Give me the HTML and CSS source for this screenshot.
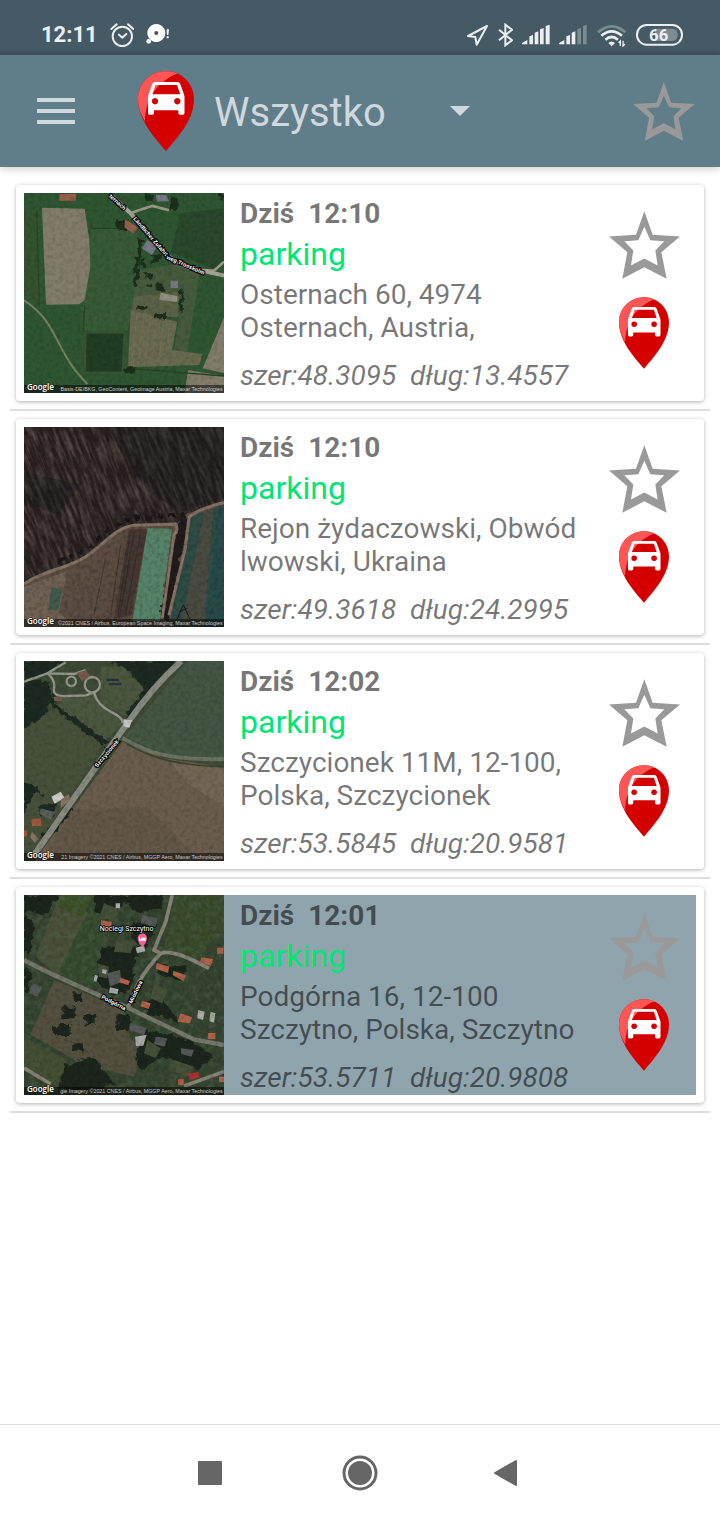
FILE: index.html
```html
<!DOCTYPE html>
<html lang="pl">
<head>
<meta charset="utf-8">
<meta name="viewport" content="width=device-width, initial-scale=1">
<title>Wszystko</title>
<link rel="stylesheet" href="styles.css">
</head>
<body>
<svg class="defs" aria-hidden="true">
  <symbol id="pin" viewBox="0 0 56 80">
    <path fill="#d40000" d="M28 0C12.500 0 0 12.500 0 28C0 49 17 67 28 80C39 67 56 49 56 28C56 12.500 43.500 0 28 0Z"/>
    <path fill="#f55" d="M28 0C12.500 0 0 12.500 0 28C0 36 3 43.500 7 50.500C7 28 20 10 39.500 2.500C36 1 32 0 28 0Z"/>
    <path fill="#fff" fill-rule="evenodd" d="M17 11H39.500Q41.500 11 42.300 13L46.500 25V42Q46.500 43.800 44.800 43.800H42Q40.300 43.800 40.300 42V39.300H16V42Q16 43.800 14.300 43.800H11.700Q10 43.800 10 42V25L14.200 13Q15 11 17 11ZM17.500 14L14.300 23.200H42.200L39 14ZM17 27a3.200 3.200 0 1 0 .01 0ZM39.300 27a3.200 3.200 0 1 0 .01 0Z"/>
  </symbol>
  <symbol id="star" viewBox="86 94 213 203">
    <path fill="#999" fill-rule="evenodd" d="M192 94L217 165L299 170L243 217L259 297L192 262L126 297L141 217L86 170L167 165ZM192 141L174 181L132 184L159 212L152 257L192 236L232 257L225 212L252 184L210 181Z"/>
  </symbol>
  <filter id="grain" x="0" y="0" width="100%" height="100%">
    <feTurbulence type="fractalNoise" baseFrequency=".08" numOctaves="2" seed="4"/>
    <feColorMatrix values="0 0 0 0 0  0 0 0 0 0  0 0 0 0 0  1.8 0 0 0 -.72"/>
  </filter>
  <filter id="rough" x="-10%" y="-10%" width="120%" height="120%">
    <feTurbulence type="fractalNoise" baseFrequency=".05" numOctaves="2" seed="8" result="n"/>
    <feDisplacementMap in="SourceGraphic" in2="n" scale="26" xChannelSelector="R" yChannelSelector="G"/>
  </filter>
  <filter id="forest" x="0" y="0" width="100%" height="100%">
    <feTurbulence type="fractalNoise" baseFrequency=".1 .014" numOctaves="3" seed="2"/>
    <feColorMatrix values="0 0 0 0 .5  0 0 0 0 .42  0 0 0 0 .39  2.2 0 0 0 -.85"/>
  </filter>
  <filter id="leaves" x="0" y="0" width="100%" height="100%">
    <feTurbulence type="fractalNoise" baseFrequency=".045" numOctaves="3" seed="9"/>
    <feColorMatrix values="0 0 0 0 .08  0 0 0 0 .13  0 0 0 0 .08  4 0 0 0 -1.9"/>
  </filter>
</svg>

<div class="screen">
  <div class="status">
    <span class="clock">12:11</span>
    <svg width="24" height="24" viewBox="331 69 72 72" fill="none" stroke="#eceff1" stroke-width="6" stroke-linecap="round"><circle cx="368" cy="109" r="29"/><path d="M335 87L351 73M385 73L401 87M358 104L368 113L380 102"/></svg>
    <svg width="24" height="24" viewBox="439 69 72 72" fill="#fff"><path fill-rule="evenodd" d="M470 72a27 27 0 1 0 .01 0ZM470 93a6 6 0 1 1-.01 0Z"/><circle cx="447" cy="124" r="7"/><path d="M501 88h7l-2 17h-4zM501 109h6v6h-6z"/></svg>
    <span class="spacer"></span>
    <svg width="22" height="24" viewBox="321 69 66 72" fill="none" stroke="#eceff1" stroke-width="6" stroke-linejoin="round"><path d="M324 108L381 78L350 134L346 111Z"/></svg>
    <svg width="16" height="24" viewBox="411 69 48 72" fill="none" stroke="#eceff1" stroke-width="6"><path d="M417 89L456 121L436 136V74L456 89L417 121"/></svg>
    <svg width="29" height="24" viewBox="483 69 87 72" fill="#eceff1"><path d="M486 133v-4l16-9v13zM508 109l11-4v28h-11zM524 98l11-4v39h-11zM540 88l11-4v49h-11zM557 78l12-4v59h-12z"/></svg>
    <svg width="31" height="24" viewBox="594 69 93 72" fill="#eceff1"><path d="M597 133v-4l16-9v13zM619 109l11-4v28h-11zM635 98l11-4v39h-11z"/><path fill="#7d8b92" d="M652 88l11-4v49h-11zM669 78l11-4v59h-11z"/></svg>
    <svg width="31" height="24" viewBox="711 69 93 72" fill="none" stroke="#eceff1" stroke-width="8"><path stroke="#7d8b92" d="M714 97Q755 61 796 97"/><path d="M724 107Q755 81 786 107M736 119Q755 103 774 119"/><path fill="#eceff1" stroke="none" d="M745 129Q755 120 765 129L755 139Z"/><path stroke-width="4" d="M781 138V123L776 129M789 122V138L795 132"/></svg>
    <svg width="47" height="24" viewBox="828 69 141 72"><path fill="#7d8b92" d="M885 86H936Q953 86 953 104T936 123H885Z"/><rect x="831" y="75" width="135" height="59" rx="29" fill="none" stroke="#eceff1" stroke-width="6"/><text x="896" y="123" text-anchor="middle" class="level">66</text></svg>
  </div>

  <header class="bar">
    <button class="menu" aria-label="Menu"><svg width="38" height="26" fill="#cfd8dc"><path d="M0 0h38v4H0zM0 11h38v4H0zM0 22h38v4H0z"/></svg></button>
    <svg class="pin-lg"><use href="#pin"/></svg>
    <label class="filter">
      <select aria-label="Kategoria"><option>Wszystko</option></select>
      <svg width="20" height="10" viewBox="0 0 20 10"><path fill="#cfd8dc" d="M0 0H20L10 10Z"/></svg>
    </label>
    <button class="fav" aria-label="Ulubione"><svg class="star-sm"><use href="#star"/></svg></button>
  </header>

  <main class="list">
    <article class="item"><div class="card"><div class="row">
      <svg class="map" viewBox="30 39 600 600">
        <rect x="30" y="39" width="600" height="600" fill="#2f5632"/>
        <path fill="#34532f" d="M30 90L62 88L76 378L30 350Z"/>
        <path fill="#29482c" d="M500 100L630 85V250L600 268L470 215Z"/>
        <path fill="#375a37" d="M230 145L360 140L375 180L360 390L340 450L212 452L200 370L228 250Z"/>
        <path fill="#465b3c" d="M372 270L500 250L556 280L520 515L480 515L495 410L350 400Z"/>
        <path fill="#827c6c" d="M84 83L212 86L226 180L229 260L212 360L195 373L96 374Z"/>
        <path fill="#5a6247" d="M360 350L495 335L490 412L350 405Z"/>
        <path fill="#6a6a50" d="M350 390L490 425L474 510L565 522L556 555L342 562Z"/>
        <path fill="none" stroke="#7e795d" stroke-width="2" opacity=".6" d="M370 395L352 560M390 400L372 560M410 406L392 558M430 410L412 557M450 417L432 556M470 423L450 556"/>
        <path fill="#827c6c" d="M630 412L583 525L566 565L630 580ZM522 570L630 588V639H512Z"/>
        <path fill="#213d24" stroke="#3a5334" stroke-width="7" d="M214 457H332L326 578H212Z"/>
        <path fill="none" stroke="#7a8060" stroke-width="6" d="M30 361C90 400 110 440 140 500S195 585 220 612"/>
        <path fill="none" stroke="#294426" stroke-width="4" d="M68 90L76 376M230 145H350M212 375L208 452M345 565L630 588"/>
        <g fill="#1c2f1d" filter="url(#rough)"><path d="M372 175l14 6-18 140-12-6zM400 310h14v14h-14zM394 280h18v15h-18zM416 225h22v26h-22zM380 240h16v20h-16zM425 310h22v22h-22zM497 330h9v70h-9zM370 375h30v14h-30zM420 403h36v15h-36zM328 562h34v17h-34zM392 40h24v25h-24zM470 48h20v42h-20zM618 39h12v22h-12zM310 120h30v30h-30z"/></g>
        <path fill="#955f49" d="M136 42h50v20h-50zM333 118l38 24-12 19-28-19z"/>
        <path fill="#777886" d="M400 180l30 18-16 27-30-20zM425 45h32l8 18-35 2zM470 302h22v22h-22z"/>
        <path fill="#92907f" d="M440 338l50 10v18l-54-6z"/>
        <path fill="none" stroke="#9a9b86" stroke-width="8" d="M352 99Q390 85 415 78L465 91M556 270L600 272L630 245"/>
        <path fill="none" stroke="#a4a596" stroke-width="12" d="M290 45L350 100L440 205Q490 262 555 270L630 287"/>
        <rect x="30" y="39" width="600" height="600" filter="url(#grain)" opacity=".16"/>
        <g class="road"><text transform="translate(284 50) rotate(42)">ternach</text><text transform="translate(357 117) rotate(49)">Ländlicher Zufahrts</text><text transform="translate(456 236) rotate(23)">weg Trosskolm</text></g>
        <path fill="#000" opacity=".5" d="M30 615H630V639H30Z"/>
        <text class="credit" x="626" y="633">Basis-DE/BKG, GeoContent, Geoimage Austria, Maxar Technologies</text><text class="google" x="39" y="629">Google</text>
      </svg>
      <div class="info"><h2>Dziś&nbsp; 12:10</h2><p class="name">parking</p><p>Osternach 60, 4974 Osternach, Austria,</p><p class="coords">szer:48.3095&nbsp; dług:13.4557</p></div>
      <div class="actions"><button aria-label="Dodaj do ulubionych"><svg class="star"><use href="#star"/></svg></button><button aria-label="Pokaż na mapie"><svg class="pin"><use href="#pin"/></svg></button></div>
    </div></div></article>

    <article class="item"><div class="card"><div class="row">
      <svg class="map" viewBox="30 36 600 600">
        <rect x="30" y="36" width="600" height="600" fill="#28201f"/>
        <g transform="rotate(-22 330 260)"><rect x="-150" y="-200" width="1000" height="850" filter="url(#forest)" opacity=".32"/></g>
        <path fill="#15191b" opacity=".35" d="M280 36H630V250L500 290L400 230ZM30 170L200 210L130 300L30 260Z"/>
        <path fill="#5d4d42" d="M30 510L100 465L190 440L330 338L490 325L520 295L630 262V636H30Z"/>
        <path fill="#706153" d="M30 515L160 468L135 590L180 636H30Z"/>
        <path fill="#5a493e" d="M330 345L400 340L355 636H260Z"/>
        <path fill="#463832" d="M345 343H400L352 600L300 612Z"/>
        <path fill="#578469" d="M401 340L474 341L438 618H355Z"/>
        <path fill="#3f5c4a" d="M112 517L145 525L132 587L104 583Z"/>
        <path fill="#2f4c45" d="M530 307L630 268V636H466Z"/>
        <path fill="#4b4c41" d="M570 290L598 280L570 636H500Z"/>
        <path fill="#274b4a" d="M610 290L630 278V636H575Z"/>
        <path fill="none" stroke="#28201d" stroke-width="3" opacity=".5" d="M320 390L290 600M345 380L312 600M380 350L335 600M275 430L240 600M360 350L320 590"/>
        <path fill="#211c1b" filter="url(#rough)" d="M497 310L524 304L507 400L460 618L440 600L468 430Z"/>
        <path fill="none" stroke="#857466" stroke-width="9" d="M30 507C80 470 160 460 215 425S300 340 360 331L485 327Q495 345 480 360L445 610M630 262Q550 282 525 307L514 400L465 600"/>
        <path fill="none" stroke="#1b1718" stroke-width="12" stroke-dasharray="18 16" filter="url(#rough)" d="M130 440Q230 410 290 335L360 310L510 300"/>
        <rect x="30" y="36" width="600" height="600" filter="url(#grain)" opacity=".25"/>
        <path fill="none" stroke="#1b1718" stroke-width="3" d="M490 612L508 570L528 612M496 590L520 580"/>
        <path fill="#000" opacity=".5" d="M30 612H630V636H30Z"/>
        <text class="credit" x="626" y="630">©2021 CNES / Airbus, European Space Imaging, Maxar Technologies</text><text class="google" x="39" y="626">Google</text>
      </svg>
      <div class="info"><h2>Dziś&nbsp; 12:10</h2><p class="name">parking</p><p>Rejon żydaczowski, Obwód lwowski, Ukraina</p><p class="coords">szer:49.3618&nbsp; dług:24.2995</p></div>
      <div class="actions"><button aria-label="Dodaj do ulubionych"><svg class="star"><use href="#star"/></svg></button><button aria-label="Pokaż na mapie"><svg class="pin"><use href="#pin"/></svg></button></div>
    </div></div></article>

    <article class="item"><div class="card"><div class="row">
      <svg class="map" viewBox="30 33 600 600">
        <rect x="30" y="33" width="600" height="600" fill="#3f4b36"/>
        <path fill="#47513a" d="M120 170L270 280L60 600H30V240Z"/>
        <path fill="#4b573f" d="M150 140L235 130L325 220L270 275L130 170ZM260 50L330 50L390 120L340 200L260 160Z"/>
        <path fill="#455643" d="M520 33H630V322L480 325L330 262Z"/>
        <path fill="#6a5d4d" d="M325 275L450 325L630 352V633H60Z"/>
        <path fill="#746654" d="M470 335L630 355V470L520 400Z"/>
        <path fill="#635747" d="M180 480L400 470L560 633H80Z"/>
        <g fill="#1e2b20" filter="url(#rough)"><path d="M30 33H160L80 80L30 90ZM30 95L100 90L125 150L95 190L30 240ZM290 33H500L430 100L345 210L335 190L385 130L375 95L325 50ZM115 155L285 275L270 290L120 175ZM30 395L60 410L90 440L60 430L30 490ZM75 470L125 460L120 500L80 500ZM100 570L180 480L165 480L80 560Z"/></g>
        <g fill="none" stroke="#93988b" stroke-width="7"><path d="M30 95L100 70L155 37M100 70L180 72L215 60M100 70Q125 90 120 115T155 138L215 136L240 128Q250 165 290 185T325 220"/><circle cx="235" cy="104" r="23"/><circle cx="172" cy="94" r="14"/></g>
        <path fill="#263442" d="M277 86h37v7h-37zM285 99h36v7h-36z"/>
        <path fill="#75594b" d="M188 68l28-8 15 18-28 15zM120 140h25v13h-25z"/>
        <path fill="none" stroke="#6e7464" stroke-width="12" d="M325 264C390 298 430 330 630 328"/>
        <path fill="none" stroke="#39442e" stroke-width="5" d="M340 282C420 330 510 348 630 350"/>
        <path fill="none" stroke="#888b80" stroke-width="18" d="M502 33Q420 105 340 220L250 345L60 615"/>
        <path fill="#c9cbc5" d="M112 440l28-15 12 18-30 18zM328 208l26 3-8 22-18-5z"/>
        <path fill="#a5593d" d="M52 508l28-3 2 22-28 2zM30 541l10 2-2 16-8 2z"/>
        <path fill="#85715f" d="M54 546l20 20-12 14-14-20zM140 450l24-18 6 17-30 25z"/>
        <path fill="#5b5f5b" d="M80 475l44 12-14 22-34-18z"/>
        <path fill="none" stroke="#81705b" stroke-width="1" opacity=".5" d="M350 300L600 440M310 320L600 500M280 360L590 550M250 400L580 610M220 440L500 620M180 490L380 620"/>
        <rect x="30" y="33" width="600" height="600" filter="url(#grain)" opacity=".18"/>
        <g class="road"><text transform="translate(250 353) rotate(-50)">Szczycionek</text></g>
        <path fill="#000" opacity=".5" d="M30 609H630V633H30Z"/>
        <text class="credit" x="626" y="627">21 Imagery ©2021 CNES / Airbus, MGGP Aero, Maxar Technologies</text><text class="google" x="39" y="623">Google</text>
      </svg>
      <div class="info"><h2>Dziś&nbsp; 12:02</h2><p class="name">parking</p><p>Szczycionek 11M, 12-100, Polska, Szczycionek</p><p class="coords">szer:53.5845&nbsp; dług:20.9581</p></div>
      <div class="actions"><button aria-label="Dodaj do ulubionych"><svg class="star"><use href="#star"/></svg></button><button aria-label="Pokaż na mapie"><svg class="pin"><use href="#pin"/></svg></button></div>
    </div></div></article>

    <article class="item selected"><div class="card"><div class="row">
      <svg class="map" viewBox="30 45 600 600">
        <rect x="30" y="45" width="600" height="600" fill="#35442f"/>
        <path fill="#4b5039" d="M135 50L225 100L130 285L65 230Z"/>
        <path fill="#3d5129" d="M140 45H240L205 110L130 80Z"/>
        <path fill="#354a2f" d="M240 60L300 100L255 300L220 320L130 285Z"/>
        <path fill="#394b2b" d="M485 45H630V150L540 245L450 205Z"/>
        <rect x="30" y="45" width="600" height="600" filter="url(#leaves)" opacity=".4"/>
        <path fill="#545140" d="M120 300L330 390L350 480L395 500L360 590L200 550L50 465Z"/>
        <path fill="#444f34" d="M30 470L160 540L130 620L30 560Z"/>
        <g fill="#1b271d" filter="url(#rough)"><path d="M30 45H135L90 110L30 90ZM30 100L60 130L50 220L30 220ZM30 260L55 280L45 340L30 340ZM235 45H450L440 85L380 100L330 70L280 120L250 100ZM350 130H430L400 200L360 190ZM265 200H370L350 330L300 345L240 300ZM145 380h40v35h-40zM120 435h50v30h-50zM175 490h30v25h-30zM215 405h30v30h-30zM175 340h30v20h-30zM310 405h35v45h-35zM160 550L240 530L300 610L230 635L130 625ZM430 250L520 260L500 300L430 280ZM380 370L440 350L500 430L400 400ZM400 450L530 480L600 530L550 570L440 530L380 570L360 530Z"/></g>
        <path fill="#46513a" d="M270 70l50 20-20 30-45-5zM310 175l50 10-10 35-50-5zM250 250l35 10-5 35-25-5zM400 480l40 25-15 30-35-15zM480 540l60 20-20 30-55-20zM420 310l40 20-15 40-35-15z"/>
        <path fill="none" stroke="#77796c" stroke-width="13" d="M30 240C110 285 190 315 260 348L345 385L540 478L630 495"/>
        <path fill="none" stroke="#858476" stroke-width="11" d="M342 382L370 315Q400 260 440 220Q475 205 585 265M440 220L420 210L455 125L475 45M30 564L110 612M510 618L630 575"/>
        <path fill="#555958" d="M385 105l45 10-5 25-45-10zM280 280l38-10 5 35-35 15zM350 430l48 15-8 20-44-15zM425 470l35 5-8 25-32-8zM500 505l40 5-8 20-30-8zM55 310l30 10-15 30-25-10z"/>
        <path fill="#b1624b" d="M428 248l38 12-4 19-36-13zM478 272l38 14-8 17-32-18zM385 363l25 7-6 17-25-8zM500 400l34 12-6 18-38-5zM562 232l36 5-8 20-32-10zM610 203h18v18h-18zM582 459h22v18h-22zM320 293l28 10-5 13-27-9zM262 121l32 5-3 14-30-3zM492 598h17v17h-17zM615 590h15v16h-15z"/>
        <path fill="#b52f2c" d="M522 582l30-7 3 17-28 8z"/>
        <path fill="#a9aca7" d="M305 70h13v15h-13zM365 203l25-6 4 17-25 6zM288 322l26 6-4 14-25-4zM363 470l35-6-10 33-22 1zM590 395l14 5-4 28-14-5zM552 390l20 5-5 25-17-5zM265 268l14 2-3 12-12-3zM242 284l10 3-5 19-8-4z"/>
        <rect x="30" y="45" width="600" height="600" filter="url(#grain)" opacity=".2"/>
        <path fill="#f0629a" d="M385 200Q371 189 371 174a14 14 0 0 1 28 0Q399 189 385 200Z"/><path fill="#fff" d="M375 172h3v5h4v-4h13v9h-20z"/>
        <text class="place" x="338" y="153">Noclegi Szczytno</text>
        <g class="road"><text transform="translate(261 355) rotate(27)">Podgórna</text><text transform="translate(354 371) rotate(-64)">Miodowa</text></g>
        <path fill="#000" opacity=".5" d="M30 621H630V645H30Z"/>
        <text class="credit" x="626" y="639">gle Imagery ©2021 CNES / Airbus, MGGP Aero, Maxar Technologies</text><text class="google" x="39" y="635">Google</text>
      </svg>
      <div class="info"><h2>Dziś&nbsp; 12:01</h2><p class="name">parking</p><p>Podgórna 16, 12-100 Szczytno, Polska, Szczytno</p><p class="coords">szer:53.5711&nbsp; dług:20.9808</p></div>
      <div class="actions"><button aria-label="Dodaj do ulubionych"><svg class="star"><use href="#star"/></svg></button><button aria-label="Pokaż na mapie"><svg class="pin"><use href="#pin"/></svg></button></div>
    </div></div></article>
  </main>

  <nav class="nav">
    <button aria-label="Ostatnie"><svg width="36" height="36" fill="#666"><rect x="6" y="6" width="24" height="24" rx="1"/></svg></button>
    <button aria-label="Ekran główny"><svg width="36" height="36" fill="#666"><circle cx="18" cy="18" r="12"/><circle cx="18" cy="18" r="16" fill="none" stroke="#666" stroke-width="3"/></svg></button>
    <button aria-label="Wstecz"><svg width="36" height="36" fill="#666" stroke="#666" stroke-width="2" stroke-linejoin="round"><path d="M3 18L24 6V30Z"/></svg></button>
  </nav>
</div>
</body>
</html>
```

FILE: styles.css
```css
* { box-sizing: border-box; }
body { margin: 0; background: #fff; font-family: Roboto, "Noto Sans", sans-serif; }
svg { display: block; flex: none; }
button { display: block; padding: 0; border: 0; background: none; cursor: pointer; }
h2, p { margin: 0; }
.defs { position: absolute; width: 0; height: 0; }

.screen { display: flex; flex-direction: column; min-height: 100vh; }

.status {
  display: flex; align-items: center; gap: 8px;
  height: 55px; padding: 15px 37px 0 41px;
  background: linear-gradient(#465a65 48px, #3f525c);
}
.clock { font-size: 22px; line-height: 24px; font-weight: 700; color: #eceff1; margin-right: 4px; }
.status .clock + svg { margin-right: 4px; }
.spacer { flex: 1; }
.level { font: 700 50px Roboto, sans-serif; fill: #eceff1; }

.bar {
  display: flex; align-items: center;
  height: 112px; padding: 0 25px 0 37px;
  background: #607d8a;
  box-shadow: 0 2px 8px rgba(0, 0, 0, .2);
}
.menu { margin-right: 63px; }
.pin-lg { width: 56px; height: 80px; }
.filter { display: grid; align-items: center; width: 256px; margin-left: 20px; }
.filter > * { grid-area: 1 / 1; }
.filter svg { justify-self: end; pointer-events: none; }
.filter select {
  appearance: none; width: 100%; padding: 6px 0 2px; border: 0; background: none;
  font: 400 40px/48px Roboto, sans-serif; color: #cfd8dc;
}
.fav { margin-left: auto; }
.star-sm { width: 62px; height: 59px; }

.list { flex: 1; padding: 10px 10px 0; }
.item { padding: 8px 6px; border-bottom: 2px solid #ddd; }
.card {
  padding: 8px; border-radius: 4px; background: #fff;
  box-shadow: 0 1px 4px rgba(0, 0, 0, .3);
}
.row { display: flex; min-height: 200px; }
.selected .row { background: #90a4ae; }
.map { width: 200px; height: 200px; }
.info {
  flex: 1; min-width: 0; display: flex; flex-direction: column;
  padding: 4px 0 1px 16px;
  font-size: 28px; line-height: 33px; color: rgba(0, 0, 0, .54);
}
.info h2 { font-size: 28px; line-height: 33px; font-weight: 700; }
.info .name { margin: 5px 0; font-size: 32px; line-height: 38px; color: #00e676; }
.info .coords { margin-top: auto; font-style: italic; }
.actions { display: flex; flex-direction: column; align-items: center; gap: 18px; width: 104px; padding-top: 18px; }
.star { width: 71px; height: 68px; }
.pin { width: 50px; height: 72px; }

.credit { font: 16px "Liberation Sans", sans-serif; fill: #ccc; text-anchor: end; }
.google { font: 600 24px "Open Sans", sans-serif; fill: #fff; stroke: #222; stroke-width: 3px; paint-order: stroke; }
.road { font: 700 17px "Liberation Sans", sans-serif; fill: #fff; stroke: #000; stroke-width: 7px; paint-order: stroke; }
.place { font: 21px Roboto, sans-serif; fill: #fff; stroke: #000; stroke-width: 5px; paint-order: stroke; text-anchor: middle; }

.nav {
  display: grid; grid-template-columns: repeat(3, 150px); justify-content: center;
  height: 96px; border-top: 1px solid #e0e0e0; background: #fff;
}
.nav button { display: grid; place-items: center; }
```
